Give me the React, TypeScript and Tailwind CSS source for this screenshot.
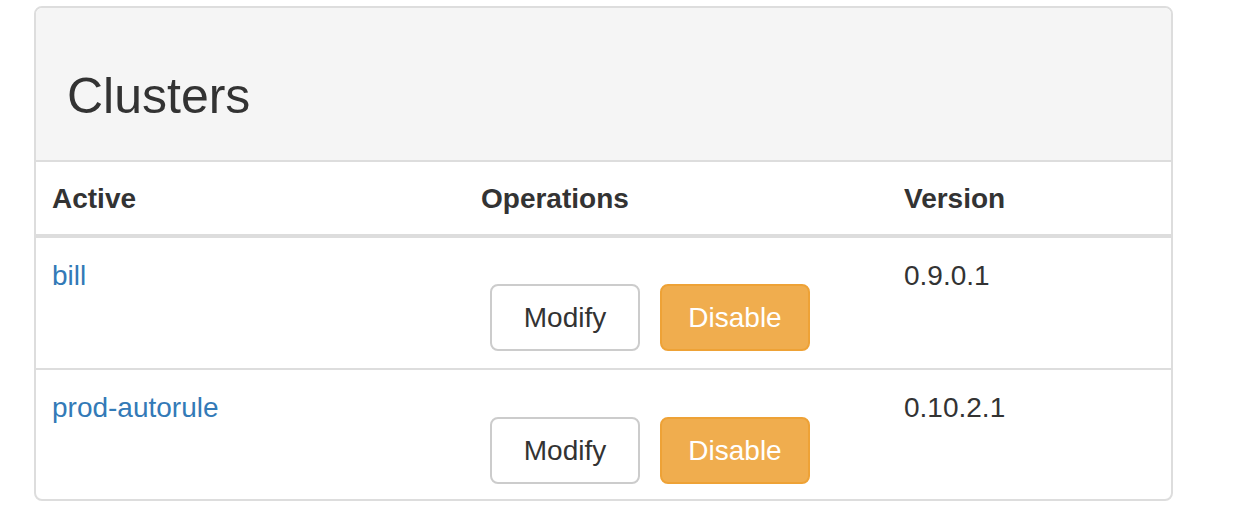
import React from 'react'

const clusters = [
  { name: 'bill', version: '0.9.0.1' },
  { name: 'prod-autorule', version: '0.10.2.1' },
]

const font = { fontFamily: '"Liberation Sans", Arial, sans-serif' }

export default function App() {
  return (
    <div className="min-h-screen bg-white pt-[6px] pl-[34px] text-[#333]" style={font}>
      <div className="w-[1139px] border-2 border-[#ddd] rounded-[8px] overflow-hidden bg-white">
        {/* Panel heading */}
        <div className="h-[154px] bg-[#f5f5f5] border-b-2 border-[#ddd] pl-[31px] pt-[61px]">
          <h1 className="text-[50px] leading-[55px] font-normal text-[#333]">Clusters</h1>
        </div>

        {/* Table head */}
        <div className="grid grid-cols-[429px_423px_1fr] border-b-4 border-[#ddd] text-[28px] leading-[40px] font-bold">
          <div className="pt-[17px] pb-[15px] px-4">Active</div>
          <div className="pt-[17px] pb-[15px] px-4">Operations</div>
          <div className="pt-[17px] pb-[15px] px-4">Version</div>
        </div>

        {/* Rows */}
        {clusters.map((c, i) => (
          <div
            key={c.name}
            className={
              i > 0
                ? 'grid grid-cols-[429px_423px_1fr] border-t-2 border-[#ddd] text-[28px] leading-[40px] h-[131px]'
                : 'grid grid-cols-[429px_423px_1fr] text-[28px] leading-[40px] h-[130px]'
            }
          >
            <div className="pt-[18px] px-4">
              <a href="#" className="text-[#337ab7]">{c.name}</a>
            </div>
            <div className="p-4">
              <div className={i > 0 ? 'flex gap-[20px] mt-[31px] ml-[9px]' : 'flex gap-[20px] mt-[30px] ml-[9px]'}>
                <button className="w-[150px] h-[67px] rounded-[8px] border-2 border-[#ccc] bg-white text-[#333] text-[28px]">
                  Modify
                </button>
                <button className="w-[150px] h-[67px] rounded-[8px] border-2 border-[#eea236] bg-[#f0ad4e] text-white text-[28px]">
                  Disable
                </button>
              </div>
            </div>
            <div className="pt-[18px] px-4">{c.version}</div>
          </div>
        ))}
      </div>
    </div>
  )
}
